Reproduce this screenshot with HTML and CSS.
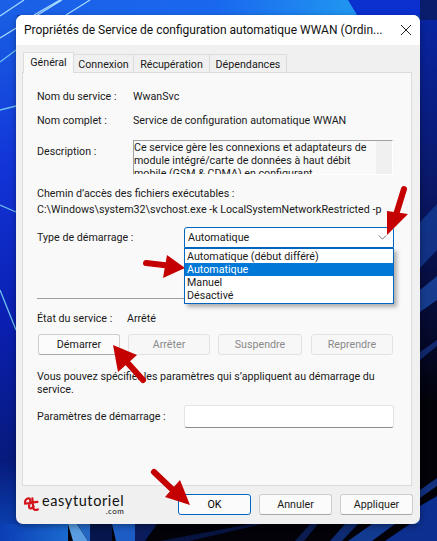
FILE: index.html
```html
<!DOCTYPE html>
<html lang="fr">
<head>
<meta charset="UTF-8" />
<meta name="viewport" content="width=device-width, initial-scale=1" />
<title>Propriétés de Service de configuration automatique WWAN</title>
<link rel="stylesheet" href="styles.css">
</head>
<body>
  <!-- Fond d'écran -->
  <svg class="wallpaper" viewBox="0 0 437 541" aria-hidden="true">
    <defs>
      <linearGradient id="bgTop" x1="0" y1="0" x2="1" y2="0">
        <stop offset="0" stop-color="#1a5fe6" />
        <stop offset="0.5" stop-color="#1a68ee" />
        <stop offset="0.8" stop-color="#2095f0" />
      </linearGradient>
      <linearGradient id="bgLeft" x1="0" y1="0" x2="0" y2="1">
        <stop offset="0" stop-color="#1a62e4" />
        <stop offset="0.3" stop-color="#1235d8" />
        <stop offset="0.6" stop-color="#0a1fb0" />
        <stop offset="0.85" stop-color="#071a7c" />
        <stop offset="1" stop-color="#0b47b8" />
      </linearGradient>
      <linearGradient id="bgRight" x1="0" y1="0" x2="0" y2="1">
        <stop offset="0" stop-color="#0826a8" />
        <stop offset="0.3" stop-color="#0a1a70" />
        <stop offset="0.6" stop-color="#050a30" />
        <stop offset="0.75" stop-color="#020208" />
        <stop offset="1" stop-color="#020208" />
      </linearGradient>
      <linearGradient id="bgBottom" x1="0" y1="0" x2="1" y2="0">
        <stop offset="0" stop-color="#0b3db4" />
        <stop offset="1" stop-color="#1a6ad0" />
      </linearGradient>
    </defs>
    <rect width="17" height="541" fill="url(#bgLeft)" />
    <rect width="437" height="15" fill="url(#bgTop)" />
    <rect x="420" width="17" height="541" fill="url(#bgRight)" />
    <polygon points="348,0 420,0 420,15 357,15" fill="#0a30d0" />
    <rect x="420" width="17" height="20" fill="#0a1c6c" />
    <polygon points="420,222 437,204 437,250 420,268" fill="#16409c" opacity="0.7" />
    <polygon points="420,290 437,276 437,300 420,312" fill="#1c48a4" opacity="0.8" />
    <polygon points="420,352 437,340 437,346 420,360" fill="#12286c" />
    <polygon points="420,490 437,478 437,486 420,498" fill="#12307c" />
    <polygon points="420,506 437,496 437,541 420,541" fill="#0d2f90" />
    <rect y="524" width="437" height="17" fill="#020208" />
    <rect y="524" width="68" height="17" fill="url(#bgBottom)" />
    <polygon points="68,524 77,524 88,541 73,541" fill="#5a9ce0" />
    <polygon points="77,524 90,524 90,541 88,541" fill="#2468c4" />
    <polygon points="90,524 112,524 112,541 90,541" fill="#06164c" />
    <polygon points="112,524 135,524 135,541 116,541" fill="#1c5cc4" />
    <polygon points="135,524 157,524 145,541 135,541" fill="#0a1c5c" />
    <polygon points="160,541 250,524 262,524 190,541" fill="#081440" />
    <polygon points="295,541 310,524 318,524 304,541" fill="#0a1c50" />
    <polygon points="330,541 345,524 358,524 342,541" fill="#0e2a70" />
    <polygon points="348,541 372,524 395,524 372,541" fill="#123a90" />
    <polygon points="385,541 410,524 437,524 437,541" fill="#0d2f90" />
    <path d="M0 16 L24 0 M0 38 L62 0 M34 15 L60 0 M66 15 L90 0" stroke="#a8dcff" stroke-width="1.2" fill="none" />
    <path d="M0 62 L16 50 M0 110 L16 106 M0 205 L16 212 M0 290 L16 330" stroke="#6cc0ee" stroke-width="1.3" fill="none" />
  </svg>

  <div class="window">
    <div class="titlebar">
      <span class="title">Propriétés de Service de configuration automatique WWAN (Ordin...</span>
      <svg class="close" viewBox="0 0 10 10" aria-hidden="true"><path d="M0 0 L10 10 M10 0 L0 10" /></svg>
    </div>

    <div class="content">
      <div class="tabs">
        <div class="tab tab-general active">Général</div>
        <div class="tab tab-connexion">Connexion</div>
        <div class="tab tab-recup">Récupération</div>
        <div class="tab tab-dep">Dépendances</div>
      </div>

      <div class="panel">
        <div class="row row-name"><span class="label-name">Nom du service :</span><span>WwanSvc</span></div>
        <div class="row row-full"><span class="label-name">Nom complet :</span><span>Service de configuration automatique WWAN</span></div>
        <div class="row row-desc">
          <span class="label-name">Description :</span>
          <div class="desc-box">
            <div class="desc-text">Ce service gère les connexions et adaptateurs de module intégré/carte de données à haut débit mobile (GSM &amp; CDMA) en configurant</div>
            <div class="scrollbar"></div>
          </div>
        </div>

        <div class="path-label">Chemin d’accès des fichiers exécutables :</div>
        <div class="path-value">C:\Windows\system32\svchost.exe -k LocalSystemNetworkRestricted -p</div>

        <div class="row row-type">
          <span class="label-wide">Type de démarrage :</span>
          <div class="combo">
            <span>Automatique</span>
            <svg class="chevron" viewBox="0 0 10 6" aria-hidden="true"><path d="M0.5 0.5 L5 5 L9.5 0.5" /></svg>
            <ul class="dropdown">
              <li>Automatique (début différé)</li>
              <li class="selected">Automatique</li>
              <li>Manuel</li>
              <li>Désactivé</li>
            </ul>
          </div>
        </div>

        <hr class="separator" />

        <div class="row row-state"><span class="label-state">État du service :</span><span>Arrêté</span></div>

        <div class="service-buttons">
          <button class="btn btn-strong">Démarrer</button>
          <button class="btn" disabled>Arrêter</button>
          <button class="btn btn-wide" disabled>Suspendre</button>
          <button class="btn btn-last" disabled>Reprendre</button>
        </div>

        <p class="hint">Vous pouvez spécifier les paramètres qui s’appliquent au démarrage du service.</p>

        <div class="row row-params">
          <span class="label-wide">Paramètres de démarrage :</span>
          <div class="text-input"></div>
        </div>
      </div>

      <div class="footer">
        <div class="logo">
          <svg class="logo-mark" viewBox="0 0 20 20" aria-hidden="true">
            <path d="M9 9.5 L2.5 10 C1.5 5 7 2 8.5 5.5 C9.5 8 5 14 8 15.5 C10 16.5 11.5 15 12.5 13.5" />
            <path d="M11 4 L12 15 C12.5 18 15 18 17.5 17 M8.5 9 L17 8" />
          </svg>
          <div class="logo-text">
            <span class="logo-name">easytutoriel</span>
            <span class="logo-com">.com</span>
          </div>
        </div>
        <button class="btn btn-foot btn-default">OK</button>
        <button class="btn btn-foot btn-strong">Annuler</button>
        <button class="btn btn-foot btn-strong">Appliquer</button>
      </div>
    </div>
  </div>

  <!-- Flèches rouges par-dessus la capture -->
  <svg class="arrows" viewBox="0 0 437 541" aria-hidden="true">
    <path d="M404 189 L395 218" />
    <polygon points="387,235 387,211 408,214" />
    <path d="M146 263 L172 266" />
    <polygon points="185,268 167,255 163,278" />
    <path d="M143 380 L125 360" />
    <polygon points="113,345 137,355 118,372" />
    <path d="M154 472 L175 492" />
    <polygon points="190,505 180,480 165,497" />
  </svg>
</body>
</html>
```

FILE: styles.css
```css
:root {
  --texto: #1a1a1a;
  --fundo: #f0f0f0;
  --painel: #f9f9f9;
  --azul: #0067c0;
  --vermelho: #c40000;
}
html, body {
  margin: 0;
  padding: 0;
}
body {
  width: 437px;
  height: 541px;
  overflow: hidden;
  box-sizing: border-box;
  padding: 15px 17px 17px 16px;
  background: #0a3fb0;
  font-family: Roboto, "Liberation Sans", sans-serif;
  font-size: 10.7px;
  line-height: 13px;
  color: var(--texto);
}
.wallpaper, .arrows {
  position: absolute;
  left: 0;
  top: 0;
  width: 437px;
  height: 541px;
}
.arrows {
  pointer-events: none;
}
.arrows path {
  stroke: var(--vermelho);
  stroke-width: 6;
  stroke-linecap: round;
  fill: none;
}
.arrows polygon {
  fill: var(--vermelho);
}

.window {
  position: relative;
  height: 509px;
  display: flex;
  flex-direction: column;
  border-radius: 7px;
  overflow: hidden;
  background: var(--fundo);
  box-shadow: 0 2px 6px rgba(0,0,0,0.35);
}
.titlebar {
  height: 30px;
  flex: none;
  display: flex;
  align-items: center;
  justify-content: space-between;
  padding: 0 9px 0 8px;
  background: #fff;
}
.title {
  white-space: nowrap;
  font-size: 12px;
  color: #111;
}
.close {
  width: 10px;
  height: 10px;
}
.close path {
  stroke: #222;
  stroke-width: 1;
  fill: none;
}

.content {
  flex: 1;
  display: flex;
  flex-direction: column;
  padding: 9px 8px 0 6px;
}
.tabs {
  height: 18px;
  display: flex;
  padding-left: 1px;
}
.tab {
  height: 18px;
  box-sizing: border-box;
  padding-top: 3px;
  text-align: center;
  background: #f0f0f0;
  border: 1px solid #dcdcdc;
  border-bottom: none;
  border-left: none;
}
.tab-general { width: 51px; }
.tab-connexion { width: 60px; }
.tab-recup { width: 76px; }
.tab-dep { width: 77px; }
.tab.active {
  height: 21px;
  margin-top: -2px;
  padding-top: 3px;
  background: var(--painel);
  border-left: 1px solid #dcdcdc;
  position: relative;
  z-index: 1;
}
.panel {
  height: 414px;
  box-sizing: border-box;
  padding: 17px 17px 0 14px;
  background: var(--painel);
  border: 1px solid #dcdcdc;
}

.row {
  display: flex;
  align-items: flex-start;
}
.label-name {
  width: 96px;
  flex: none;
}
.label-wide {
  width: 147px;
  flex: none;
}
.label-state {
  width: 90px;
  flex: none;
}
.row-full {
  margin-top: 11px;
}
.row-desc {
  margin-top: 13px;
}
.row-desc .label-name {
  margin-top: 5px;
}
.desc-box {
  width: 260px;
  height: 35px;
  box-sizing: border-box;
  display: flex;
  overflow: hidden;
  border: 1px solid #a0a0a0;
  border-right-color: #fff;
  border-bottom-color: #fff;
}
.desc-text {
  flex: 1;
}
.scrollbar {
  width: 16px;
  flex: none;
  background: #f0f0f0;
}
.path-label {
  margin-top: 12px;
}
.path-value {
  margin-top: 3px;
  white-space: nowrap;
}

.row-type {
  margin-top: 11px;
}
.row-type .label-wide {
  margin-top: 4px;
}
.combo {
  position: relative;
  width: 210px;
  height: 21px;
  box-sizing: border-box;
  display: flex;
  align-items: center;
  justify-content: space-between;
  padding: 0 6px 0 3px;
  background: #fff;
  border: 1px solid var(--azul);
  border-radius: 3px 3px 0 0;
}
.chevron {
  width: 9px;
  height: 5px;
}
.chevron path {
  stroke: #555;
  fill: none;
}
.dropdown {
  position: absolute;
  z-index: 2;
  left: -1px;
  top: 20px;
  width: 210px;
  box-sizing: border-box;
  margin: 0;
  padding: 1px 0;
  list-style: none;
  background: #fff;
  border: 1px solid var(--azul);
  box-shadow: 3px 3px 4px rgba(0,0,0,0.3);
}
.dropdown li {
  height: 13px;
  padding-left: 2px;
}
.dropdown .selected {
  background: #0078d7;
  color: #fff;
}

.separator {
  width: 356px;
  margin: 50px 0 0;
  border: none;
  border-top: 1px solid #a0a0a0;
}
.row-state {
  margin-top: 13px;
}
.service-buttons {
  margin: 9px 0 0 1px;
  display: flex;
  gap: 8px;
}
.btn {
  width: 82px;
  height: 21px;
  padding: 0;
  font: inherit;
  color: var(--texto);
  background: #fbfbfb;
  border: 1px solid #d8d8d8;
  border-radius: 3px;
}
.btn:disabled {
  color: #8a8a8a;
  background: #f7f7f7;
  border-color: #e2e2e2;
}
.btn-wide {
  width: 84px;
}
.btn-last {
  margin-left: 1px;
}
.btn-strong {
  border-color: #cfcfcf;
  border-bottom-color: #a8a8a8;
}
.hint {
  width: 350px;
  margin: 15px 0 0;
}
.row-params {
  margin-top: 9px;
  align-items: center;
}
.text-input {
  width: 210px;
  height: 23px;
  box-sizing: border-box;
  background: #fff;
  border: 1px solid #e5e5e5;
  border-bottom-color: #8c8c8c;
  border-radius: 3px;
}

.footer {
  flex: 1;
  display: flex;
  align-items: flex-start;
  padding-top: 8px;
}
.logo {
  width: 156px;
  height: 22px;
  flex: none;
  display: flex;
  align-items: flex-start;
  gap: 2px;
}
.logo-mark {
  width: 17px;
  height: 17px;
  margin-left: 1px;
  margin-top: 1px;
  flex: none;
}
.logo-mark path {
  stroke: #d5161d;
  stroke-width: 2.6;
  stroke-linecap: round;
  fill: none;
}
.logo-text {
  display: flex;
  flex-direction: column;
  align-items: flex-end;
}
.logo-name {
  font-family: Lato, sans-serif;
  font-size: 14.5px;
  line-height: 14px;
  letter-spacing: 0.6px;
  color: #111;
}
.logo-com {
  font-family: Lato, sans-serif;
  font-size: 8px;
  line-height: 6px;
  letter-spacing: 0.4px;
  color: #111;
}
.btn-foot {
  width: 73px;
  height: 21px;
  margin-right: 8px;
  flex: none;
}
.btn-default {
  border: 1px solid var(--azul);
  color: #000;
}
```
